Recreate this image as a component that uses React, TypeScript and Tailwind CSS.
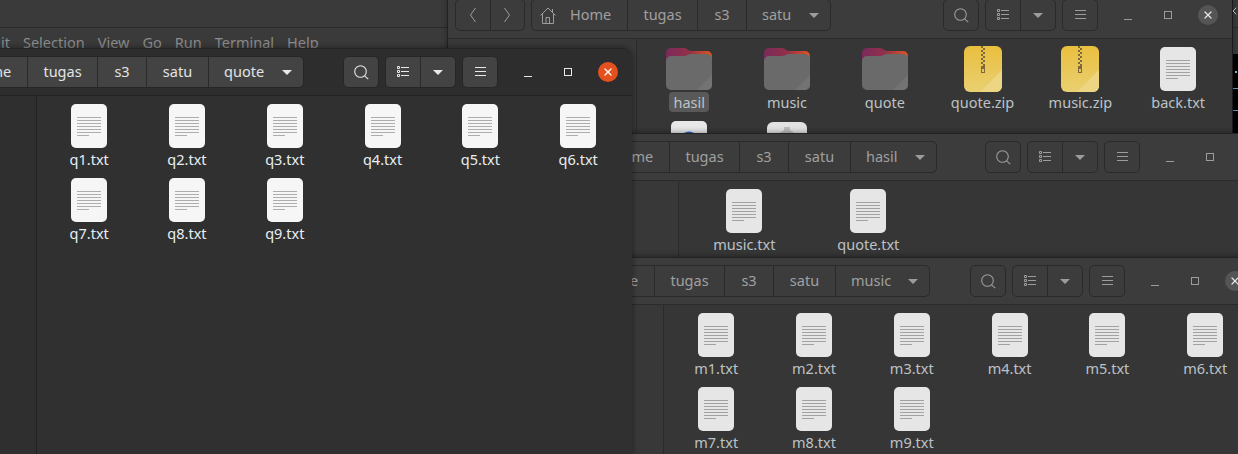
import { X } from 'lucide-react';

type Item = { name: string; kind: 'doc' | 'folder' | 'zip' | 'blue' | 'gear'; selected?: boolean };

const docs = (prefix: string, n: number): Item[] =>
  Array.from({ length: n }, (_, i) => ({ name: `${prefix}${i + 1}.txt`, kind: 'doc' }));

const DocIcon = ({ dim }: { dim: boolean }) => (
  <svg width="36" height="44" viewBox="0 0 36 44">
    <rect width="36" height="44" rx="5" fill={dim ? '#e6e6e6' : '#f6f6f6'} />
    <g fill={dim ? '#a2a2a2' : '#adadad'}>
      {[13, 16, 19, 22, 25, 28].map((y) => (
        <rect key={y} x="6" y={y} width="24" height="1" />
      ))}
      <rect x="6" y="31" width="12" height="1" />
    </g>
  </svg>
);

const FolderIcon = () => (
  <svg width="46" height="42" viewBox="0 0 46 42">
    <defs>
      <linearGradient id="folderBack" x1="0" x2="1" y1="0" y2="0">
        <stop offset="0" stopColor="#7a2a5a" />
        <stop offset="0.5" stopColor="#93304a" />
        <stop offset="1" stopColor="#e0551f" />
      </linearGradient>
    </defs>
    <path d="M0 5a5 5 0 0 1 5-5h13c3 0 4 3 7 3h16a5 5 0 0 1 5 5v8H0z" fill="url(#folderBack)" />
    <path d="M0 13a5 5 0 0 1 5-5h13c3 0 4-2 7-2h16a5 5 0 0 1 5 5v26a5 5 0 0 1-5 5H5a5 5 0 0 1-5-5z" fill="#6a6a6a" />
    <path d="M46 27v10a5 5 0 0 1-5 5H31z" fill="#737373" />
  </svg>
);

const ZipIcon = () => (
  <svg width="38" height="46" viewBox="0 0 38 46">
    <defs>
      <linearGradient id="zipBody" x1="0" x2="0" y1="0" y2="1">
        <stop offset="0" stopColor="#e9bf3f" />
        <stop offset="1" stopColor="#e9d071" />
      </linearGradient>
    </defs>
    <rect width="38" height="46" rx="6" fill="url(#zipBody)" />
    <path d="M38 24v16a6 6 0 0 1-6 6H16z" fill="#ecd683" />
    <g fill="#7d6a3a">
      {[0, 4, 8, 12, 16].map((y) => (
        <rect key={y} x="17" y={y} width="2" height="2" />
      ))}
      {[2, 6, 10, 14, 18].map((y) => (
        <rect key={y} x="19" y={y} width="2" height="2" />
      ))}
      <rect x="17" y="20" width="4" height="7" />
    </g>
    <rect x="18" y="23" width="2" height="3" fill="#e0c868" />
  </svg>
);

const PartialIcon = ({ kind }: { kind: 'blue' | 'gear' }) =>
  kind === 'blue' ? (
    <svg width="36" height="44" viewBox="0 0 36 44">
      <rect width="36" height="44" rx="5" fill="#e8e8e8" />
      <circle cx="18" cy="20" r="9.5" fill="#2b5fd0" />
    </svg>
  ) : (
    <svg width="40" height="44" viewBox="0 0 40 44">
      <rect width="40" height="44" y="1" rx="6" fill="#e2e2e2" />
      <circle cx="20" cy="20" r="11" fill="#bdbdbd" />
      <rect x="17" y="6" width="6" height="6" fill="#bdbdbd" />
    </svg>
  );

const HomeIcon = ({ color }: { color: string }) => (
  <svg width="16" height="17" viewBox="0 0 16 17" fill="none" stroke={color}>
    <path d="M.5 8.5 8 1l7.5 7.5M2.5 7v9.5h11V7M6 16.5v-6h3.5v6M12.5 2v3.5" />
  </svg>
);

const NavArrow = ({ color, right }: { color: string; right?: boolean }) => (
  <svg width="6" height="14" viewBox="0 0 6 14" fill="none" stroke={color}>
    <path d={right ? 'M.5 0l5 7-5 7' : 'M5.5 0l-5 7 5 7'} />
  </svg>
);

const SearchIcon = ({ color }: { color: string }) => (
  <svg width="15" height="15" viewBox="0 0 15 15" fill="none" stroke={color} strokeWidth="1.1">
    <circle cx="6.5" cy="6.5" r="5.8" />
    <path d="M10.6 10.8l3.6 3.4" />
  </svg>
);

const ListIcon = ({ color }: { color: string }) => (
  <svg width="12" height="12" viewBox="0 0 12 12" fill="none" stroke={color}>
    <path d="M.5.5h2v2h-2zM.5 4.5h2v2h-2zM.5 8.5h2v2h-2zM4 1.5h8M4 5.5h8M4 9.5h8" />
  </svg>
);

const Caret = ({ color }: { color: string }) => (
  <svg width="10" height="5" viewBox="0 0 10 5">
    <path d="M0 0h10L5 5z" fill={color} />
  </svg>
);

const Burger = ({ color }: { color: string }) => (
  <svg width="11" height="10" viewBox="0 0 11 10" fill="none" stroke={color}>
    <path d="M0 .5h11M0 4.5h11M0 8.5h11" />
  </svg>
);

type WindowProps = {
  className: string;
  segments: { label: string; width: string }[];
  last: string;
  lastWidth: string;
  active?: boolean;
  grid: string;
  items: Item[];
};

const FileWindow = ({ className, segments, last, lastWidth, active = false, grid, items }: WindowProps) => {
  const icon = active ? '#e8e8e8' : '#9c9c9c';
  const btn = active ? 'border-[#262626] bg-[#434343]' : 'border-[#2a2a2a] bg-[#3c3c3c]';
  const divider = 'border-[#2a2a2a]';
  const text = active ? 'text-[#e4e4e4]' : 'text-[#a0a0a0]';

  return (
    <div
      className={`absolute flex w-[784px] flex-col overflow-hidden rounded-t-[10px] border-t border-[#232323] shadow-[0_0_6px_rgba(0,0,0,0.45)] ${className}`}
    >
      <header
        className={`flex h-[47px] shrink-0 items-start border-b pl-[7px] pr-[4px] pt-[7px] ${
          active ? 'border-[#222222] bg-[#2d2d2d]' : 'border-[#2b2b2b] bg-[#3c3c3c]'
        }`}
      >
        <div className={`flex h-[32px] w-[70px] rounded-[5px] border ${btn}`}>
          <div className={`flex flex-1 items-center justify-center border-r ${divider}`}>
            <NavArrow color={icon} />
          </div>
          <div className="flex flex-1 items-center justify-center">
            <NavArrow color={icon} right />
          </div>
        </div>
        <div className={`ml-[6px] flex h-[32px] rounded-[5px] border text-[14.5px] ${btn} ${text}`}>
          <div className={`flex w-[96px] items-center gap-[14px] border-r pl-[8px] ${divider}`}>
            <HomeIcon color={icon} />
            <span>Home</span>
          </div>
          {segments.map((s) => (
            <div key={s.label} className={`flex items-center justify-center border-r ${s.width} ${divider}`}>
              {s.label}
            </div>
          ))}
          <div className={`flex items-center justify-between pl-[15px] pr-[11px] ${lastWidth}`}>
            <span>{last}</span>
            <Caret color={icon} />
          </div>
        </div>
        <div className="flex-1" />
        <div className={`flex h-[32px] w-[36px] items-center justify-center rounded-[5px] border ${btn}`}>
          <SearchIcon color={icon} />
        </div>
        <div className={`ml-[6px] flex h-[32px] w-[71px] rounded-[5px] border ${btn}`}>
          <div className={`flex w-[35px] items-center justify-center border-r ${divider}`}>
            <ListIcon color={icon} />
          </div>
          <div className="flex flex-1 items-center justify-center">
            <Caret color={icon} />
          </div>
        </div>
        <div className={`ml-[6px] flex h-[32px] w-[36px] items-center justify-center rounded-[5px] border ${btn}`}>
          <Burger color={icon} />
        </div>
        <div className="ml-[10px] flex h-[32px] w-[120px] items-center">
          <div className="flex w-[40px] justify-center pt-[8px]">
            <div className="h-px w-[8px]" style={{ backgroundColor: icon }} />
          </div>
          <div className="flex w-[40px] justify-center">
            <div className="size-[8px] border" style={{ borderColor: icon }} />
          </div>
          <div className="flex w-[40px] justify-center">
            <div
              className={`flex size-[20px] items-center justify-center rounded-full ${
                active ? 'bg-[#e5511e]' : 'bg-[#555555]'
              }`}
            >
              <X size={12} strokeWidth={2.4} color={active ? '#ffffff' : '#e6e6e6'} />
            </div>
          </div>
        </div>
      </header>
      <div className="flex min-h-0 flex-1">
        <aside
          className={`w-[189px] shrink-0 border-r ${
            active ? 'border-[#222222] bg-[#2f2f2f]' : 'border-[#2b2b2b] bg-[#383838]'
          }`}
        />
        <main className={`min-h-0 flex-1 overflow-hidden pl-[3.3px] pt-[8px] ${active ? 'bg-[#303030]' : 'bg-[#363636]'}`}>
          <div className={`grid ${grid}`}>
            {items.map((item) => (
              <div key={item.name} className="flex h-[74px] flex-col items-center">
                <div className="flex h-[44px] items-center justify-center">
                  {item.kind === 'doc' && <DocIcon dim={!active} />}
                  {item.kind === 'folder' && <FolderIcon />}
                  {item.kind === 'zip' && <ZipIcon />}
                  {item.kind === 'blue' && <PartialIcon kind="blue" />}
                  {item.kind === 'gear' && <PartialIcon kind="gear" />}
                </div>
                <div
                  className={`mt-px rounded-[4px] px-[4px] text-[14.5px] leading-[20px] ${
                    active ? 'text-[#e8eef2]' : 'text-[#bcc2c6]'
                  } ${item.selected ? 'bg-[#595959]' : ''}`}
                >
                  {item.name}
                </div>
              </div>
            ))}
          </div>
        </main>
      </div>
    </div>
  );
};

const topItems: Item[] = [
  { name: 'hasil', kind: 'folder', selected: true },
  { name: 'music', kind: 'folder' },
  { name: 'quote', kind: 'folder' },
  { name: 'quote.zip', kind: 'zip' },
  { name: 'music.zip', kind: 'zip' },
  { name: 'back.txt', kind: 'doc' },
  { name: ' ', kind: 'blue' },
  { name: '  ', kind: 'gear' },
];

const tugasS3 = [
  { label: 'tugas', width: 'w-[70px]' },
  { label: 's3', width: 'w-[49px]' },
];
const base = [...tugasS3, { label: 'satu', width: 'w-[62px]' }];

export default function App() {
  return (
    <div className="relative h-[454px] w-[1238px] overflow-hidden bg-[#3a3a3a] font-['Noto_Sans',sans-serif]">
      {/* editor behind everything */}
      <div className="absolute left-0 top-0 w-[448px] border-r border-[#2b2b2b]">
        <div className="h-[28px] border-b border-[#2b2b2b]" />
        <div className="flex items-center gap-[13px] pt-[4px] text-[14.5px] text-[#8c8c8c]">
          <span className="ml-[1px]">it</span>
          <span>Selection</span>
          <span>View</span>
          <span>Go</span>
          <span>Run</span>
          <span>Terminal</span>
          <span>Help</span>
        </div>
      </div>
      {/* terminal strip on the right */}
      <div className="absolute left-[1232px] top-0 flex h-[133px] w-[6px] flex-col overflow-hidden border-l border-[#222222]">
        <div className="h-[28px] border-b border-[#2b2b2b] bg-[#3a3a3a] pt-[5px]">
          <X size={12} strokeWidth={2} color="#d0d0d0" className="-ml-[6px]" />
        </div>
        <div className="h-[26px] bg-[#3a3a3a]" />
        <div className="flex-1 bg-black pt-[17px]">
          <div className="ml-[2px] h-[2px] w-[2px] bg-[#7fc4e8]" />
          <div className="mt-[15px] h-px bg-[#5f9fb8]" />
          <div className="mt-[21px] h-px bg-[#5f9fb8]" />
        </div>
      </div>

      <FileWindow
        className="-top-[9px] left-[448px] h-[142px]"
        segments={tugasS3}
        last="satu"
        lastWidth="w-[83px]"
        grid="grid-cols-[repeat(6,97.8px)]"
        items={topItems}
      />
      <FileWindow
        className="left-[490px] top-[133px] h-[125px]"
        segments={base}
        last="hasil"
        lastWidth="w-[85px]"
        grid="grid-cols-[repeat(2,124px)]"
        items={[
          { name: 'music.txt', kind: 'doc' },
          { name: 'quote.txt', kind: 'doc' },
        ]}
      />
      <FileWindow
        className="left-[475px] top-[257px] h-[197px]"
        segments={base}
        last="music"
        lastWidth="w-[93px]"
        grid="grid-cols-[repeat(6,97.8px)]"
        items={docs('m', 9)}
      />
      <FileWindow
        active
        className="-left-[152px] top-[48px] h-[406px]"
        segments={base}
        last="quote"
        lastWidth="w-[94px]"
        grid="grid-cols-[repeat(6,97.8px)]"
        items={docs('q', 9)}
      />
    </div>
  );
}
